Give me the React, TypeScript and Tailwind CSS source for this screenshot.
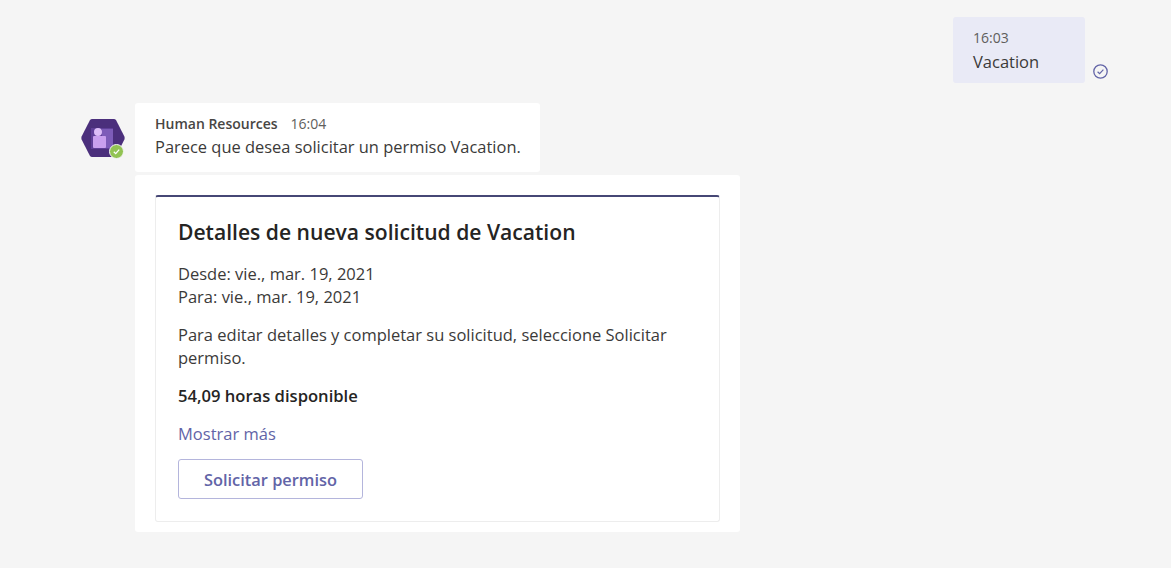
const font = { fontFamily: '"Open Sans", "Noto Sans", sans-serif' };

function Avatar() {
  return (
    <div className="relative w-[44px] h-[40px] mt-[16px] ml-[81px] mr-[10px] shrink-0">
      <svg width="44" height="40" viewBox="0 0 44 40">
        <path d="M11 0 H33 Q34 0 35 1 L43.4 17.5 Q44 19 43.4 20.5 L35 37 Q34 38 33 38 H11 Q10 38 9 37 L0.6 20.5 Q0 19 0.6 17.5 L9 1 Q10 0 11 0 Z" fill="#4b2f7c" />
        <rect x="10" y="9" width="22" height="21" fill="#5f3f98" />
        <rect x="21" y="10" width="11" height="19" fill="#7d5cb8" />
        <rect x="12" y="17" width="13" height="12" rx="1" fill="#c9a0ee" />
        <circle cx="17" cy="13" r="4" fill="#dcbdf7" />
      </svg>
      <div className="absolute left-[28px] top-[25px] w-[15px] h-[15px] rounded-full bg-[#92c353] border border-[#f5f5f5] flex items-center justify-center">
        <svg width="9" height="9" viewBox="0 0 9 9" fill="none">
          <path d="M1.8 4.8 L3.7 6.6 L7.2 2.6" stroke="#fff" strokeWidth="1.3" />
        </svg>
      </div>
    </div>
  );
}

export default function App() {
  return (
    <div className="w-[1171px] h-[568px] overflow-hidden bg-[#f5f5f5] text-[#252423] pt-[17px]" style={font}>
      <div className="flex justify-end pr-[86px]">
        <div className="w-[132px] h-[66px] rounded-[3px] bg-[#e9eaf6] px-[20px] pt-[11px]">
          <div className="text-[14px] leading-[20px] text-[#605e5c]">16:03</div>
          <div className="text-[16.5px] leading-[28px] text-[#3b3a39]">Vacation</div>
        </div>
        <svg className="absolute left-[1093px] top-[64px]" width="15" height="15" viewBox="0 0 15 15" fill="none">
          <circle cx="7.5" cy="7.5" r="6.7" stroke="#6264a7" strokeWidth="1.3" />
          <path d="M4.6 7.8 L6.6 9.7 L10.4 5.6" stroke="#6264a7" strokeWidth="1.2" />
        </svg>
      </div>

      <div className="flex mt-[20px]">
        <Avatar />
        <div>
          <div className="w-[405px] h-[69px] bg-white rounded-[3px] px-[20px] pt-[11px]">
            <div className="flex items-center h-[20px] text-[14px] leading-[20px]">
              <span className="font-semibold text-[#484644]">Human Resources</span>
              <span className="ml-[13px] text-[#605e5c]">16:04</span>
            </div>
            <div className="text-[16.45px] leading-[26px] text-[#3b3a39] whitespace-nowrap">Parece que desea solicitar un permiso Vacation.</div>
          </div>
          <div className="w-[605px] h-[357px] mt-[3px] bg-white rounded-[3px] p-[20px] pb-[10px]">
            <div className="h-[327px] rounded-[3px] border border-[#ededed] border-t-2 border-t-[#464775] px-[22px] pt-[20px]">
              <div className="text-[21.1px] leading-[30px] font-semibold text-[#252423]">Detalles de nueva solicitud de Vacation</div>
              <div className="mt-[15px] text-[16.5px] leading-[23px] text-[#3b3a39]">
                <div>Desde: vie., mar. 19, 2021</div>
                <div>Para: vie., mar. 19, 2021</div>
              </div>
              <div className="mt-[15px] text-[16.5px] leading-[23px] text-[#3b3a39] w-[500px]">
                Para editar detalles y completar su solicitud, seleccione Solicitar permiso.
              </div>
              <div className="mt-[15px] text-[16.6px] leading-[23px] font-semibold text-[#252423]">54,09 horas disponible</div>
              <div className="mt-[15px] text-[16.5px] leading-[23px] text-[#6264a7]">Mostrar más</div>
              <button className="mt-[14px] w-[185px] h-[40px] pt-[2px] rounded-[3px] border border-[#b4b5dc] bg-white text-[16.4px] font-semibold text-[#6264a7]" style={font}>
                Solicitar permiso
              </button>
            </div>
          </div>
        </div>
      </div>
    </div>
  );
}
